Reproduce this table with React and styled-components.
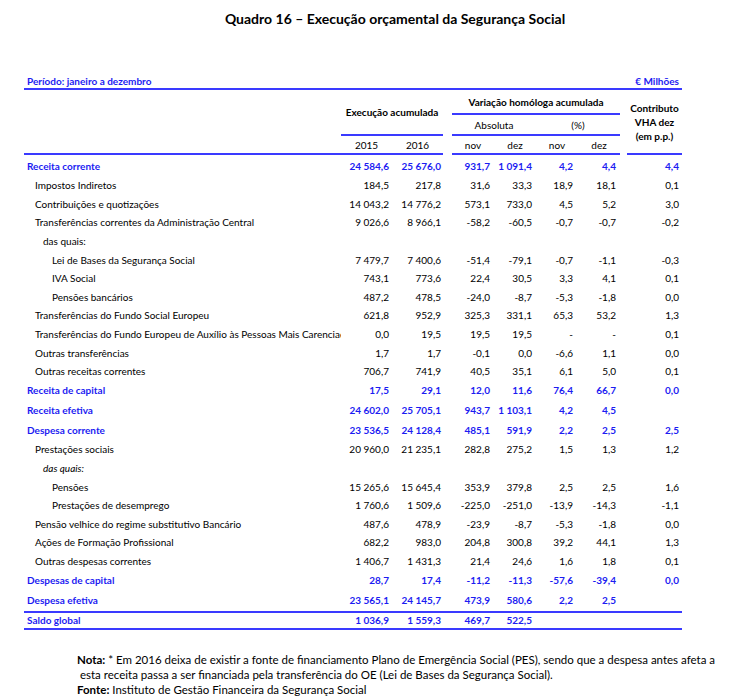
import React from "react";
import styled, { createGlobalStyle } from "styled-components";

const BLUE = "#1c1cf2";
const LINE = "#3a3aff";
const COLS = "317px 51px 51px 9px 42px 42px 42px 42px 7px 55px";

const GlobalStyle = createGlobalStyle`
  body {
    margin: 0;
    background: #fff;
    font-family: Lato, "Liberation Sans", sans-serif;
    color: #000;
  }
`;

const Page = styled.div`
  width: 736px;
  height: 699px;
  overflow: hidden;
`;

const Title = styled.h1`
  margin: 0;
  padding: 10px 0 0 54px;
  text-align: center;
  font-size: 14px;
  line-height: 18px;
  font-weight: 700;
`;

const TableWrap = styled.div`
  margin: 46px 0 0 24px;
  width: 658px;
  font-size: 10px;
`;

const PeriodRow = styled.div`
  display: flex;
  justify-content: space-between;
  align-items: center;
  height: 14px;
  padding: 0 3px;
  border-bottom: 2px solid ${LINE};
  color: ${BLUE};
  font-weight: 700;
`;

const Header = styled.div`
  display: grid;
  grid-template-columns: ${COLS};
  grid-template-rows: 25px 21px 19px;
  font-weight: 700;
`;

const HeadCell = styled.div`
  grid-column: ${(p) => p.$col};
  grid-row: ${(p) => p.$row};
  box-sizing: border-box;
  border-bottom: 2px solid ${LINE};
  display: flex;
  align-items: center;
  justify-content: center;
  text-align: center;
  font-weight: ${(p) => (p.$light ? 400 : 700)};
  line-height: 14px;
`;

const Row = styled.div`
  display: grid;
  grid-template-columns: ${COLS};
  align-items: center;
  height: ${(p) => p.$h}px;
  box-sizing: border-box;
  color: ${(p) => (p.$total ? BLUE : "#000")};
  font-weight: ${(p) => (p.$total ? 700 : 400)};
  border-top: ${(p) => (p.$saldo ? `2px solid ${LINE}` : "none")};
  border-bottom: ${(p) => (p.$saldo ? `2px solid ${LINE}` : "none")};
`;

const Label = styled.div`
  padding-left: ${(p) => p.$indent}px;
  white-space: nowrap;
  overflow: hidden;
  font-style: ${(p) => (p.$italic ? "italic" : "normal")};
`;

const Num = styled.div`
  grid-column: ${(p) => p.$col};
  text-align: right;
  padding-right: ${(p) => p.$pad}px;
  white-space: nowrap;
`;

const Notes = styled.div`
  margin: 22px 0 0 77px;
  font-size: 11.5px;
  line-height: 15px;
`;

const Strong = styled.span`
  font-weight: 700;
`;

const NUM_COLS = [2, 3, 5, 6, 7, 8, 10];
const NUM_PAD = [3, 2, 4, 4, 5, 4, 3];
const INDENT = { 0: 3, 1: 11, sub: 19, 2: 28 };

const rows = [
  { label: "Receita corrente", lvl: 0, total: true, h: 21, v: ["24 584,6", "25 676,0", "931,7", "1 091,4", "4,2", "4,4", "4,4"] },
  { label: "Impostos Indiretos", lvl: 1, v: ["184,5", "217,8", "31,6", "33,3", "18,9", "18,1", "0,1"] },
  { label: "Contribuições e quotizações", lvl: 1, v: ["14 043,2", "14 776,2", "573,1", "733,0", "4,5", "5,2", "3,0"] },
  { label: "Transferências correntes da Administração Central", lvl: 1, v: ["9 026,6", "8 966,1", "-58,2", "-60,5", "-0,7", "-0,7", "-0,2"] },
  { label: "das quais:", lvl: "sub", v: [] },
  { label: "Lei de Bases da Segurança Social", lvl: 2, v: ["7 479,7", "7 400,6", "-51,4", "-79,1", "-0,7", "-1,1", "-0,3"] },
  { label: "IVA Social", lvl: 2, v: ["743,1", "773,6", "22,4", "30,5", "3,3", "4,1", "0,1"] },
  { label: "Pensões bancários", lvl: 2, v: ["487,2", "478,5", "-24,0", "-8,7", "-5,3", "-1,8", "0,0"] },
  { label: "Transferências do Fundo Social Europeu", lvl: 1, v: ["621,8", "952,9", "325,3", "331,1", "65,3", "53,2", "1,3"] },
  { label: "Transferências do Fundo Europeu de Auxílio às Pessoas Mais Carenciadas", lvl: 1, v: ["0,0", "19,5", "19,5", "19,5", "-", "-", "0,1"] },
  { label: "Outras transferências", lvl: 1, v: ["1,7", "1,7", "-0,1", "0,0", "-6,6", "1,1", "0,0"] },
  { label: "Outras receitas correntes", lvl: 1, v: ["706,7", "741,9", "40,5", "35,1", "6,1", "5,0", "0,1"] },
  { label: "Receita de capital", lvl: 0, total: true, v: ["17,5", "29,1", "12,0", "11,6", "76,4", "66,7", "0,0"] },
  { label: "Receita efetiva", lvl: 0, total: true, h: 21, v: ["24 602,0", "25 705,1", "943,7", "1 103,1", "4,2", "4,5", ""] },
  { label: "Despesa corrente", lvl: 0, total: true, h: 20, v: ["23 536,5", "24 128,4", "485,1", "591,9", "2,2", "2,5", "2,5"] },
  { label: "Prestações sociais", lvl: 1, v: ["20 960,0", "21 235,1", "282,8", "275,2", "1,5", "1,3", "1,2"] },
  { label: "das quais:", lvl: "sub", italic: true, v: [] },
  { label: "Pensões", lvl: 2, v: ["15 265,6", "15 645,4", "353,9", "379,8", "2,5", "2,5", "1,6"] },
  { label: "Prestações de desemprego", lvl: 2, v: ["1 760,6", "1 509,6", "-225,0", "-251,0", "-13,9", "-14,3", "-1,1"] },
  { label: "Pensão velhice do regime substitutivo Bancário", lvl: 1, v: ["487,6", "478,9", "-23,9", "-8,7", "-5,3", "-1,8", "0,0"] },
  { label: "Ações de Formação Profissional", lvl: 1, v: ["682,2", "983,0", "204,8", "300,8", "39,2", "44,1", "1,3"] },
  { label: "Outras despesas correntes", lvl: 1, v: ["1 406,7", "1 431,3", "21,4", "24,6", "1,6", "1,8", "0,1"] },
  { label: "Despesas de capital", lvl: 0, total: true, v: ["28,7", "17,4", "-11,2", "-11,3", "-57,6", "-39,4", "0,0"] },
  { label: "Despesa efetiva", lvl: 0, total: true, h: 22, v: ["23 565,1", "24 145,7", "473,9", "580,6", "2,2", "2,5", ""] },
  { label: "Saldo global", lvl: 0, total: true, saldo: true, h: 19, v: ["1 036,9", "1 559,3", "469,7", "522,5", "", "", ""] },
];

const fmt = (s) => s.replace(/ /g, "\u00a0");

export default function App() {
  return (
    <Page>
      <GlobalStyle />
      <Title>Quadro 16 – Execução orçamental da Segurança Social</Title>
      <TableWrap>
        <PeriodRow>
          <span>Período: janeiro a dezembro</span>
          <span>€ Milhões</span>
        </PeriodRow>
        <Header>
          <HeadCell $col="1" $row="1 / 4" />
          <HeadCell $col="2 / 4" $row="1 / 3">Execução acumulada</HeadCell>
          <HeadCell $col="2" $row="3" $light>2015</HeadCell>
          <HeadCell $col="3" $row="3" $light>2016</HeadCell>
          <HeadCell $col="5 / 9" $row="1">Variação homóloga acumulada</HeadCell>
          <HeadCell $col="5 / 7" $row="2" $light>Absoluta</HeadCell>
          <HeadCell $col="7 / 9" $row="2" $light>(%)</HeadCell>
          <HeadCell $col="5" $row="3" $light>nov</HeadCell>
          <HeadCell $col="6" $row="3" $light>dez</HeadCell>
          <HeadCell $col="7" $row="3" $light>nov</HeadCell>
          <HeadCell $col="8" $row="3" $light>dez</HeadCell>
          <HeadCell $col="10" $row="1 / 4">
            Contributo
            <br />
            VHA dez
            <br />
            (em p.p.)
          </HeadCell>
        </Header>
        {rows.map((r, i) => (
          <Row key={i} $h={r.h || 18.6} $total={r.total} $saldo={r.saldo}>
            <Label $indent={INDENT[r.lvl]} $italic={r.italic}>
              {r.label}
            </Label>
            {r.v.map((val, j) => (
              <Num key={j} $col={NUM_COLS[j]} $pad={NUM_PAD[j]}>
                {fmt(val)}
              </Num>
            ))}
          </Row>
        ))}
      </TableWrap>
      <Notes>
        <Strong>Nota:</Strong> * Em 2016 deixa de existir a fonte de financiamento Plano de
        Emergência Social (PES), sendo que a despesa antes afeta a
        <br />
        &nbsp;esta receita passa a ser financiada pela transferência do OE (Lei de Bases da
        Segurança Social).
        <br />
        <Strong>Fonte:</Strong> Instituto de Gestão Financeira da Segurança Social
      </Notes>
    </Page>
  );
}
